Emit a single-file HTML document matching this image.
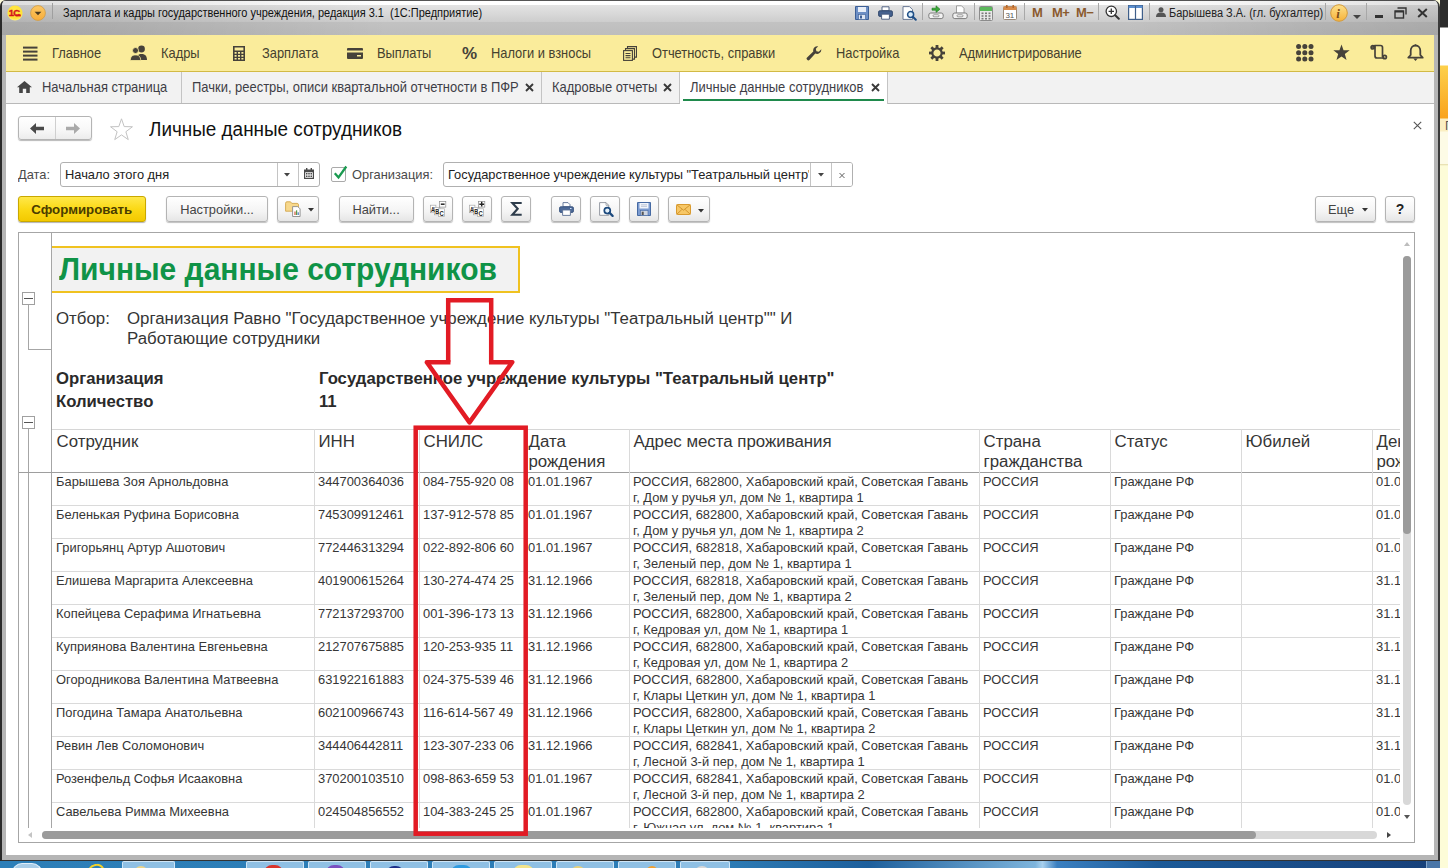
<!DOCTYPE html>
<html lang="ru"><head><meta charset="utf-8"><title>Личные данные сотрудников</title>
<style>
*{box-sizing:border-box;margin:0;padding:0}
html,body{width:1448px;height:868px;overflow:hidden}
body{position:relative;background:#fdfbd9;font-family:"Liberation Sans",Arial,sans-serif;font-size:13px;color:#222;-webkit-font-smoothing:antialiased}
.abs{position:absolute}
#win{position:absolute;left:0;top:0;width:1440px;height:861px;background:#b5b5b5;overflow:hidden;border-radius:6px 7px 0 0;border-left:2px solid #2a2a2a;border-right:2px solid #3a3a3a;border-bottom:1px solid #333}
#win>*{margin-left:-2px}
#content{position:absolute;left:6px;top:104px;width:1428px;height:751px;background:#fff}
#titlebar{position:absolute;left:0;top:0;width:1440px;height:35px;background:linear-gradient(90deg,rgba(0,0,0,.13) 0,rgba(0,0,0,.1) 8%,rgba(0,0,0,0) 27%,rgba(0,0,0,0) 78%,rgba(0,0,0,.12) 100%),linear-gradient(#555 0,#555 1px,#fff 1px,#fff 4.500px,#e3e3e3 5px,#d8d8d8 14px,#cdcdcd 22px,#c2c2c2 22.500px,#bdbdbd 35px)}
#ttl{position:absolute;left:63px;top:5px;font-size:12.3px;transform:scaleX(.893);transform-origin:0 0;white-space:pre;color:#111;line-height:16px}
#menubar{position:absolute;left:6px;top:35px;width:1428px;height:37px;background:#faec9b;border-bottom:1px solid #d2ba45}
.mi{position:absolute;top:10px;font-size:14.5px;transform:scaleX(.888);transform-origin:0 0;color:#45412f;line-height:16px;white-space:nowrap}
#tabbar{position:absolute;left:6px;top:72px;width:1428px;height:32px;background:#f2f2f2;border-bottom:1px solid #b9b9b9}
.tab{position:absolute;top:0;height:31px;border-right:1px solid #c4c4c4;font-size:13px;line-height:16px;color:#333;white-space:nowrap}
.tab span{position:absolute;top:7px;font-size:14.4px;transform:scaleX(.9);transform-origin:0 0;color:#3e3e46}
.lbl{position:absolute;font-size:13.6px;transform:scaleX(.945);transform-origin:0 0;line-height:16px;color:#4a4a4a;white-space:nowrap}
.cx{display:inline-block;font-size:13.6px;transform:scaleX(.945);transform-origin:50% 50%}
.inp>span{font-size:13.6px;transform:scaleX(.945);transform-origin:0 0}
.btn{position:absolute;top:196px;height:26px;border:1px solid #b4b4b4;border-radius:3px;background:linear-gradient(#fff,#f4f4f4 60%,#e6e6e6);box-shadow:0 1px 1px rgba(0,0,0,.25);font-size:13px;line-height:25px;text-align:center;color:#444;white-space:nowrap}
.inp{position:absolute;top:162px;height:25px;border:1px solid #b0b0b0;border-radius:3px;background:#fff;font-size:13px;line-height:23px;color:#222;white-space:nowrap;overflow:hidden}
#rep{position:absolute;left:18px;top:232px;width:1397px;height:611px;border:1px solid #a6a6a6;background:#fff;overflow:hidden}

#rep .vl{position:absolute;width:1px;background:#a6a6a6}
#rep .hl{position:absolute;height:1px;background:#dadada}
.rt{position:absolute;white-space:nowrap;font-size:16.85px;line-height:20px;color:#353535}
.rb{font-weight:bold;color:#2a2a2a;font-size:16.72px}
.rd{position:absolute;white-space:nowrap;font-size:12.9px;line-height:16px;color:#363636}
#clip{position:absolute;left:0;top:0;width:1381px;height:595px;overflow:hidden}
</style></head><body>
<div class="abs" style="left:0;top:861px;width:1448px;height:7px;background:linear-gradient(90deg,#2d7fb8 0,#2b7cb6 50%,#2a76b0 52%,#1d5f9c 60%,#7db4dc 71.500%,#a8d0ee 72%,#3a7fc0 73%,#1c5a98 80%,#173f78 100%)">
<div class="abs" style="left:122px;top:0;width:53px;height:7px;background:#8fc0e4;border:1px solid #cfe6f7;border-bottom:0;border-radius:2px 2px 0 0"></div>
<div class="abs" style="left:246px;top:0;width:58px;height:7px;background:#8fc0e4;border:1px solid #cfe6f7;border-bottom:0;border-radius:2px 2px 0 0"></div>
<div class="abs" style="left:308px;top:0;width:58px;height:7px;background:#8fc0e4;border:1px solid #cfe6f7;border-bottom:0;border-radius:2px 2px 0 0"></div>
<div class="abs" style="left:370px;top:0;width:58px;height:7px;background:#8fc0e4;border:1px solid #cfe6f7;border-bottom:0;border-radius:2px 2px 0 0"></div>
<div class="abs" style="left:432px;top:0;width:58px;height:7px;background:#8fc0e4;border:1px solid #cfe6f7;border-bottom:0;border-radius:2px 2px 0 0"></div>
<div class="abs" style="left:494px;top:0;width:58px;height:7px;background:#8fc0e4;border:1px solid #cfe6f7;border-bottom:0;border-radius:2px 2px 0 0"></div>
<div class="abs" style="left:556px;top:0;width:58px;height:7px;background:#8fc0e4;border:1px solid #cfe6f7;border-bottom:0;border-radius:2px 2px 0 0"></div>
<div class="abs" style="left:618px;top:0;width:58px;height:7px;background:#8fc0e4;border:1px solid #cfe6f7;border-bottom:0;border-radius:2px 2px 0 0"></div>
<div class="abs" style="left:680px;top:0;width:50px;height:7px;background:#8fc0e4;border:1px solid #cfe6f7;border-bottom:0;border-radius:2px 2px 0 0"></div>
<div class="abs" style="left:264px;top:4px;width:19px;height:8px;border-radius:9px 9px 0 0;background:#d9342b"></div>
<div class="abs" style="left:326px;top:4px;width:19px;height:8px;border-radius:9px 9px 0 0;background:#7a4fc0"></div>
<div class="abs" style="left:386px;top:5px;width:18px;height:8px;border-radius:9px 9px 0 0;background:#1c2f8a"></div>
<div class="abs" style="left:451px;top:4px;width:21px;height:8px;border-radius:10px 10px 0 0;background:#2f9be0"></div>
<div class="abs" style="left:513px;top:4px;width:21px;height:8px;border-radius:10px 10px 0 0;background:#f3e48a"></div>
<div class="abs" style="left:570px;top:5px;width:16px;height:8px;border-radius:8px 8px 0 0;background:#e8d27a"></div>
<div class="abs" style="left:646px;top:5px;width:12px;height:8px;border-radius:6px 6px 0 0;background:#f0a030"></div>
<div class="abs" style="left:694px;top:5px;width:16px;height:8px;border-radius:8px 8px 0 0;background:#d8d8d8"></div>
<div class="abs" style="left:134px;top:5px;width:14px;height:8px;border-radius:7px 7px 0 0;background:#ecd58a"></div>
<div class="abs" style="left:12px;top:2px;width:30px;height:10px;border-radius:15px 15px 0 0;background:#a9cde8;border:1px solid #dfeefa"></div>
<div class="abs" style="left:87px;top:3px;width:17px;height:8px;border-radius:9px 9px 0 0;border:2px solid #f1d22a;border-bottom:0;transform:rotate(-12deg)"></div>
<div class="abs" style="left:1426px;top:0;width:14px;height:7px;background:#4a76a8;border-left:1px solid #86a8cc"></div>
</div>
<div class="abs" style="left:1440px;top:0;width:8px;height:868px;overflow:hidden;background:linear-gradient(#2c2c2c 0,#2c2c2c 27px,#fff 28px,#fff 65px,#fdd04c 66px,#f9a31c 118px,#fbefc2 119px,#fbefc2 131px,#fdfbe6 132px,#fdfbe6 164px,#e9e2b4 164.500px,#fdfcd8 166px)"><span class="abs" style="left:5px;top:119px;font-size:12px;line-height:14px;color:#555">П</span></div>
<div id="win">
 <div id="titlebar">
<!-- 1C logo -->
<svg class="abs" style="left:7px;top:5px;opacity:.999" width="16" height="16" viewBox="0 0 16 16"><defs><radialGradient id="g1c" cx=".5" cy=".35" r=".7"><stop offset="0" stop-color="#ffe94a"/><stop offset=".7" stop-color="#ffe135"/><stop offset="1" stop-color="#fff3a0"/></radialGradient></defs><circle cx="8" cy="8" r="7.6" fill="url(#g1c)"/><text x="1.800" y="11.300" font-family="Liberation Sans" font-weight="bold" font-size="9.500" fill="#d3151c" stroke="#d3151c" stroke-width=".35" letter-spacing="-.9">1С</text><rect x="8.600" y="9.500" width="5.200" height="1.900" fill="#d3151c"/></svg>
<svg class="abs" style="left:30px;top:5px" width="16" height="16" viewBox="0 0 16 16"><defs><linearGradient id="gdd" x1="0" y1="0" x2="0" y2="1"><stop offset="0" stop-color="#fbc865"/><stop offset="1" stop-color="#f8ad3a"/></linearGradient></defs><circle cx="8" cy="8" r="7.4" fill="url(#gdd)" stroke="#cf9a45" stroke-width=".8"/><path d="M4.6 6.7h6.8L8 10.3z" fill="#4a3a20"/></svg>
<div class="abs" style="left:52px;top:3px;width:1px;height:16px;background:#9f9f9f"></div>
<div id="ttl">Зарплата и кадры государственного учреждения, редакция 3.1  (1С:Предприятие)</div>
<svg class="abs" style="left:855px;top:6px" width="14" height="14" viewBox="0 0 14 14"><path d="M.5 .5h13v13h-13z" fill="#6d8fc5" stroke="#3d5f96"/><rect x="3" y="1" width="8" height="5" fill="#e8eef8"/><rect x="3.5" y="8.5" width="7" height="5" fill="#dfe6f2" stroke="#3d5f96" stroke-width=".6"/><rect x="5" y="9.5" width="2" height="3" fill="#3d5f96"/></svg>
<svg class="abs" style="left:878px;top:6px" width="15" height="14" viewBox="0 0 15 14"><path d="M4 .8h7v4H4z" fill="#fff" stroke="#44577a" stroke-width=".9"/><rect x=".6" y="4.8" width="13.8" height="5.6" rx="1.2" fill="#46628f" stroke="#2e4468" stroke-width=".9"/><path d="M3.6 8.2h7.8v5H3.6z" fill="#fff" stroke="#44577a" stroke-width=".9"/></svg>
<svg class="abs" style="left:902px;top:6px" width="15" height="15" viewBox="0 0 15 15"><path d="M1 .6h6.5l3 3v9.8H1z" fill="#fff" stroke="#5a6c8a" stroke-width=".9"/><circle cx="8.6" cy="8.6" r="3" fill="#d9ecfa" stroke="#1f4f86" stroke-width="1.5"/><path d="M10.8 10.8l3 3" stroke="#1f4f86" stroke-width="2" stroke-linecap="round"/></svg>
<div class="abs" style="left:922px;top:3px;width:1px;height:17px;background:#a8a8a8"></div>
<svg class="abs" style="left:928px;top:5px" width="16" height="15" viewBox="0 0 16 15"><path d="M4 3.2h4V.8l4 3.4-4 3.4V5.2H4z" fill="#3aa83a" stroke="#1f7a1f" stroke-width=".6"/><rect x=".8" y="8" width="14.4" height="5.6" rx="2" fill="#f2f2f2" stroke="#7d7d7d" stroke-width="1"/><rect x="5" y="9.8" width="6" height="2" rx="1" fill="#fff" stroke="#7d7d7d" stroke-width=".8"/></svg>
<svg class="abs" style="left:952px;top:5px" width="16" height="15" viewBox="0 0 16 15"><path d="M4.5 .8h5l2.5 2.5v5h-7.5z" fill="#fff" stroke="#8a8a8a" stroke-width=".8"/><rect x=".8" y="8" width="14.4" height="5.6" rx="2" fill="#f2f2f2" stroke="#7d7d7d" stroke-width="1"/><rect x="5" y="9.8" width="6" height="2" rx="1" fill="#fff" stroke="#7d7d7d" stroke-width=".8"/></svg>
<div class="abs" style="left:974px;top:3px;width:1px;height:17px;background:#a8a8a8"></div>
<svg class="abs" style="left:979px;top:6px" width="14" height="15" viewBox="0 0 14 15"><rect x=".5" y=".5" width="13" height="14" rx="1" fill="#e9e9e9" stroke="#8b8b8b"/><rect x="1" y="1" width="12" height="4" fill="#5cb85c"/><g fill="#7b7b7b"><rect x="2.5" y="6.5" width="2" height="1.6"/><rect x="6" y="6.5" width="2" height="1.6"/><rect x="9.5" y="6.5" width="2" height="1.6"/><rect x="2.5" y="9.2" width="2" height="1.6"/><rect x="6" y="9.2" width="2" height="1.6"/><rect x="9.5" y="9.2" width="2" height="1.6"/><rect x="2.5" y="11.9" width="2" height="1.6"/><rect x="6" y="11.9" width="2" height="1.6"/><rect x="9.5" y="11.9" width="2" height="1.6"/></g></svg>
<svg class="abs" style="left:1003px;top:5px" width="14" height="15" viewBox="0 0 14 15"><rect x=".5" y="1.5" width="13" height="13" rx="1" fill="#fff" stroke="#9a8a7a"/><rect x=".5" y="1.5" width="13" height="3.5" fill="#d98b4a"/><rect x="3" y="0" width="1.6" height="3" fill="#b5672a"/><rect x="9.4" y="0" width="1.6" height="3" fill="#b5672a"/><text x="2.4" y="12.6" font-family="Liberation Sans" font-size="8" fill="#555">31</text></svg>
<div class="abs" style="left:1024px;top:3px;width:1px;height:17px;background:#a8a8a8"></div>
<div class="abs" style="left:1032px;top:6px;font-size:13px;font-weight:bold;color:#8a5a2e;letter-spacing:-.5px;line-height:14px;white-space:nowrap">M</div>
<div class="abs" style="left:1052px;top:6px;font-size:13px;font-weight:bold;color:#8a5a2e;letter-spacing:-.5px;line-height:14px;white-space:nowrap">M+</div>
<div class="abs" style="left:1076px;top:6px;font-size:13px;font-weight:bold;color:#8a5a2e;letter-spacing:-.5px;line-height:14px;white-space:nowrap">M−</div>
<div class="abs" style="left:1098px;top:3px;width:1px;height:17px;background:#a8a8a8"></div>
<svg class="abs" style="left:1105px;top:5px" width="15" height="15" viewBox="0 0 15 15"><circle cx="6.3" cy="6.3" r="5.2" fill="#fff" stroke="#333" stroke-width="1.3"/><path d="M3.6 6.3h5.4M6.3 3.6v5.4" stroke="#333" stroke-width="1.3"/><path d="M10.2 10.2l3.6 3.6" stroke="#333" stroke-width="2" stroke-linecap="round"/></svg>
<svg class="abs" style="left:1128px;top:5px" width="15" height="15" viewBox="0 0 15 15"><rect x=".6" y=".6" width="13.8" height="13.8" fill="#fff" stroke="#3f5f8a" stroke-width="1.2"/><rect x=".6" y=".6" width="13.8" height="2.4" fill="#5b8fd0"/><path d="M7.5 1v13" stroke="#3f5f8a" stroke-width="1.2"/></svg>
<div class="abs" style="left:1149px;top:3px;width:1px;height:17px;background:#a8a8a8"></div>
<svg class="abs" style="left:1156px;top:7px" width="10" height="10" viewBox="0 0 10 10"><circle cx="5" cy="2.8" r="2.5" fill="#555"/><path d="M0 10c0-3.5 2-4.6 5-4.6s5 1.100 5 4.600z" fill="#555"/></svg>
<div class="abs" style="left:1169px;top:5px;font-size:12.3px;transform:scaleX(.893);transform-origin:0 0;line-height:16px;color:#222;white-space:nowrap">Барышева З.А. (гл. бухгалтер)</div>
<div class="abs" style="left:1325px;top:3px;width:1px;height:17px;background:#a8a8a8"></div>
<svg class="abs" style="left:1330px;top:4px" width="18" height="18" viewBox="0 0 18 18"><defs><linearGradient id="ginf" x1="0" y1="0" x2="0" y2="1"><stop offset="0" stop-color="#fde08a"/><stop offset="1" stop-color="#f6b23a"/></linearGradient></defs><circle cx="9" cy="9" r="8.300" fill="url(#ginf)" stroke="#d39a3a" stroke-width="1"/><text x="6.300" y="13.500" font-family="Liberation Serif" font-style="italic" font-weight="bold" font-size="13" fill="#7a4a1a">i</text></svg>
<svg class="abs" style="left:1353px;top:15px" width="8" height="4" viewBox="0 0 8 4"><path d="M0 0h8L4 4z" fill="#444"/></svg>
<div class="abs" style="left:1366px;top:3px;width:1px;height:17px;background:#a8a8a8"></div>
<div class="abs" style="left:1375px;top:15px;width:8px;height:2.500px;background:#333"></div>
<svg class="abs" style="left:1394px;top:7px" width="13" height="12" viewBox="0 0 13 12"><path d="M3.500 1h8.500v6.500" fill="none" stroke="#333" stroke-width="1.400"/><rect x="1" y="4" width="8.500" height="7" fill="none" stroke="#333" stroke-width="1.400"/><path d="M1 4.600h8.500" stroke="#333" stroke-width="1.800"/></svg>
<svg class="abs" style="left:1417px;top:8px" width="11" height="10" viewBox="0 0 11 10"><path d="M1.200 1l8.600 8M9.800 1l-8.600 8" stroke="#333" stroke-width="2"/></svg>
</div>
 <div id="menubar">
<svg class="abs" style="left:17px;top:11px" width="15" height="15" viewBox="0 0 15 15"><g fill="#46423a"><rect x="0" y=".6" width="14.500" height="2"/><rect x="0" y="4.600" width="14.500" height="2"/><rect x="0" y="8.600" width="14.500" height="2"/><rect x="0" y="12.600" width="14.500" height="2"/></g></svg>
<div class="mi" style="left:46px">Главное</div>
<svg class="abs" style="left:124px;top:10px" width="18" height="16" viewBox="0 0 18 16"><g fill="#46423a"><circle cx="11.500" cy="4" r="3.400"/><path d="M6.500 15c0-4.500 2-6 5-6s5.500 1.500 5.500 6z"/><circle cx="5.500" cy="5.500" r="3" stroke="#faec9b" stroke-width=".8"/><path d="M.3 15.500c0-4 2-5.500 5.200-5.500s5.200 1.500 5.200 5.500z" stroke="#faec9b" stroke-width=".8"/></g></svg>
<div class="mi" style="left:155px">Кадры</div>
<svg class="abs" style="left:227px;top:11px" width="12" height="15" viewBox="0 0 12 15"><path fill="#46423a" fill-rule="evenodd" d="M0 0h12v15H0zM1.600 1.600v2.800h8.800V1.600zM1.600 6v1.800h2V6zM5 6v1.800h2V6zM8.400 6v1.800h2V6zM1.600 9v1.800h2V9zM5 9v1.800h2V9zM8.400 9v1.800h2V9zM1.600 12v1.600h2V12zM5 12v1.600h2V12zM8.400 12v1.600h2V12z"/></svg>
<div class="mi" style="left:256px">Зарплата</div>
<svg class="abs" style="left:341px;top:13px" width="16" height="11" viewBox="0 0 16 11"><path fill="#46423a" fill-rule="evenodd" d="M1 0h14a1 1 0 0 1 1 1v9a1 1 0 0 1-1 1H1a1 1 0 0 1-1-1V1a1 1 0 0 1 1-1zM0 2.600v1.800h16V2.600zM10 7v1.600h4V7z"/></svg>
<div class="mi" style="left:371px">Выплаты</div>
<div class="abs" style="left:456px;top:10px;font-size:17px;font-weight:bold;color:#46423a;line-height:18px">%</div>
<div class="mi" style="left:485px">Налоги и взносы</div>
<svg class="abs" style="left:617px;top:11px" width="14" height="15" viewBox="0 0 14 15"><g fill="none" stroke="#46423a" stroke-width="1.100"><path d="M4.500 2.500V.600h9v10.500h-2"/><path d="M2.500 4.500V2.600h9v10.500h-2"/><rect x=".6" y="4.600" width="8.800" height="9.800" fill="#faec9b"/><path d="M2.500 7.500h5M2.500 9.600h5M2.500 11.700h5"/></g></svg>
<div class="mi" style="left:646px">Отчетность, справки</div>
<svg class="abs" style="left:800px;top:11px" width="16" height="15" viewBox="0 0 16 15"><path fill="#46423a" d="M15.300 3.200a4.300 4.300 0 0 1-6 4.300L3.600 13.800a1.700 1.700 0 0 1-2.500-2.400L7.300 5.600A4.300 4.300 0 0 1 12.200.300L9.800 2.800l.6 2.400 2.400.6z"/></svg>
<div class="mi" style="left:830px">Настройка</div>
<svg class="abs" style="left:923px;top:10px" width="16" height="16" viewBox="0 0 16 16"><g transform="translate(8 8)"><g fill="#46423a"><rect x="-1.400" y="-8" width="2.800" height="4" transform="rotate(0)"/><rect x="-1.400" y="-8" width="2.800" height="4" transform="rotate(45)"/><rect x="-1.400" y="-8" width="2.800" height="4" transform="rotate(90)"/><rect x="-1.400" y="-8" width="2.800" height="4" transform="rotate(135)"/><rect x="-1.400" y="-8" width="2.800" height="4" transform="rotate(180)"/><rect x="-1.400" y="-8" width="2.800" height="4" transform="rotate(225)"/><rect x="-1.400" y="-8" width="2.800" height="4" transform="rotate(270)"/><rect x="-1.400" y="-8" width="2.800" height="4" transform="rotate(315)"/></g><circle r="4.700" fill="none" stroke="#46423a" stroke-width="2.200"/></g></svg>
<div class="mi" style="left:953px">Администрирование</div>
<svg class="abs" style="left:1290px;top:9px" width="18" height="18" viewBox="0 0 18 18"><g fill="#46423a"><circle cx="2.6" cy="2.6" r="2.500"/><circle cx="2.6" cy="8.8" r="2.500"/><circle cx="2.6" cy="15.0" r="2.500"/><circle cx="8.8" cy="2.6" r="2.500"/><circle cx="8.8" cy="8.8" r="2.500"/><circle cx="8.8" cy="15.0" r="2.500"/><circle cx="15.0" cy="2.6" r="2.500"/><circle cx="15.0" cy="8.8" r="2.500"/><circle cx="15.0" cy="15.0" r="2.500"/></g></svg>
<svg class="abs" style="left:1327px;top:9px" width="17" height="17" viewBox="0 0 17 17"><polygon fill="#46423a" points="8.50,0.40 10.56,6.17 16.68,6.34 11.83,10.08 13.55,15.96 8.50,12.50 3.45,15.96 5.17,10.08 0.32,6.34 6.44,6.17"/></svg>
<svg class="abs" style="left:1364px;top:9px" width="18" height="17" viewBox="0 0 18 17"><g fill="none" stroke="#46423a" stroke-width="1.700"><path d="M3 4.500v-1a2 2 0 0 1 2-2h5.500a2 2 0 0 1 2 2v9.500"/><path d="M5 1.500v10.500a2 2 0 0 0 2 2h7.500"/><circle cx="2.800" cy="3.300" r="1.700"/><circle cx="14.700" cy="13" r="1.700"/></g></svg>
<svg class="abs" style="left:1401px;top:9px" width="17" height="18" viewBox="0 0 17 18"><path d="M8.500 1.500c-3 0-4.800 2.300-4.800 5.300v4.200L1.300 13.700h14.400L13.300 11V6.800c0-3-1.800-5.300-4.800-5.300z" fill="none" stroke="#46423a" stroke-width="1.800" stroke-linejoin="round"/><path d="M6.300 14.500h4.400L8.500 17z" fill="#46423a"/><circle cx="8.500" cy="1.300" r="1" fill="#46423a"/></svg>
</div>
 <div id="tabbar">
<svg class="abs" style="left:11px;top:9px" width="15" height="12" viewBox="0 0 15 12"><path fill="#444" d="M7.500 0L0 6.300h2.200V12h3.600V7.800h3.400V12h3.600V6.300H15z"/></svg>
<div class="tab" style="left:0;width:176px"><span style="left:36px">Начальная страница</span></div>
<div class="tab" style="left:176px;width:360px"><span style="left:10px">Пачки, реестры, описи квартальной отчетности в ПФР</span></div>
<svg class="abs" style="left:519px;top:11px" width="9" height="9" viewBox="0 0 9 9"><path d="M1 1l7 7M8 1l-7 7" stroke="#3a3a3a" stroke-width="1.900"/></svg>
<div class="tab" style="left:536px;width:138px"><span style="left:10px">Кадровые отчеты</span></div>
<svg class="abs" style="left:657px;top:11px" width="9" height="9" viewBox="0 0 9 9"><path d="M1 1l7 7M8 1l-7 7" stroke="#3a3a3a" stroke-width="1.900"/></svg>
<div class="tab" style="left:674px;width:208px;background:#fff;height:32px"><span style="left:10px">Личные данные сотрудников</span><div class="abs" style="left:3px;top:27px;width:201px;height:2px;background:#1f8a4c"></div></div>
<svg class="abs" style="left:865px;top:11px" width="9" height="9" viewBox="0 0 9 9"><path d="M1 1l7 7M8 1l-7 7" stroke="#3a3a3a" stroke-width="1.900"/></svg>
</div>
 <div id="content"></div>
<div class="abs" style="left:18px;top:116px;width:74px;height:24px;border:1px solid #b4b4b4;border-radius:3px;background:linear-gradient(#fff,#f7f7f7 60%,#ececec);box-shadow:0 1px 1px rgba(0,0,0,.28)"><div class="abs" style="left:36px;top:0;width:1px;height:22px;background:#cfcfcf"></div></div>
<svg class="abs" style="left:30px;top:123px" width="14" height="11" viewBox="0 0 14 11"><path d="M0 5.500L6 0v3.800h8v3.400H6V11z" fill="#4a4a4a"/></svg>
<svg class="abs" style="left:66px;top:123px" width="14" height="11" viewBox="0 0 14 11"><path d="M14 5.500L8 0v3.800H0v3.400h8V11z" fill="#aaa"/></svg>
<svg class="abs" style="left:110px;top:118px" width="23" height="23" viewBox="0 0 23 23"><polygon points="11.50,0.80 14.20,8.58 22.44,8.75 15.87,13.72 18.26,21.60 11.50,16.90 4.74,21.60 7.13,13.72 0.56,8.75 8.80,8.58" fill="#fff" stroke="#c2c2c2" stroke-width="1"/></svg>
<div class="abs" style="left:149px;top:117px;font-size:20px;transform:scaleX(.945);transform-origin:0 0;line-height:24px;color:#111;white-space:nowrap">Личные данные сотрудников</div>
<svg class="abs" style="left:1413px;top:121px" width="9" height="9" viewBox="0 0 9 9"><path d="M.8 .8l7.400 7.400M8.200 .8L.8 8.200" stroke="#555" stroke-width="1.100"/></svg>
<div class="lbl" style="left:18px;top:167px">Дата:</div>
<div class="inp" style="left:60px;width:260px"><span class="abs" style="left:4px;top:0">Начало этого дня</span><div class="abs" style="left:216px;top:0;width:1px;height:23px;background:#c4c4c4"></div><div class="abs" style="left:237px;top:0;width:1px;height:23px;background:#c4c4c4"></div><svg class="abs" style="left:223px;top:10px" width="6" height="4" viewBox="0 0 6 4"><path d="M0 0h6L3 3.600z" fill="#444"/></svg><svg class="abs" style="left:243px;top:5px" width="10" height="11" viewBox="0 0 10 11"><path fill="#4a4a4a" fill-rule="evenodd" d="M0 1.500h10V11H0zM1.200 4.200v5.600h7.600V4.200zM2 5h1.500v1.500H2zM4.250 5h1.500v1.500h-1.500zM6.500 5H8v1.500H6.500zM2 7.500h1.500V9H2zM4.250 7.500h1.500V9h-1.500zM6.500 7.500H8V9H6.500z"/><rect x="2" y="0" width="1.400" height="2.500" fill="#4a4a4a"/><rect x="6.600" y="0" width="1.400" height="2.500" fill="#4a4a4a"/></svg></div>
<div class="abs" style="left:331px;top:167px;width:15px;height:15px;border:1px solid #aaa;border-radius:2px;background:#fff"></div><svg class="abs" style="left:333px;top:165px" width="15" height="15" viewBox="0 0 15 15"><path d="M1.800 8.200l3.700 4.300L13.300 1.500" fill="none" stroke="#1a9a50" stroke-width="2.300"/></svg>
<div class="lbl" style="left:352px;top:167px">Организация:</div>
<div class="inp" style="left:443px;width:410px"><span class="abs" style="left:4px;top:0">Государственное учреждение культуры "Театральный центр"</span><div class="abs" style="left:365px;top:0;width:46px;height:23px;background:#fff"></div><div class="abs" style="left:366px;top:0;width:1px;height:23px;background:#c4c4c4"></div><div class="abs" style="left:387px;top:0;width:1px;height:23px;background:#c4c4c4"></div><svg class="abs" style="left:374px;top:10px" width="6" height="4" viewBox="0 0 6 4"><path d="M0 0h6L3 3.600z" fill="#444"/></svg><svg class="abs" style="left:395px;top:9px" width="6" height="7" viewBox="0 0 7 7"><path d="M.6 .6l5.800 5.800M6.400 .6L.6 6.400" stroke="#555" stroke-width="1.100"/></svg></div>
<div class="btn" style="left:18px;width:128px;font-weight:bold;color:#4a3c00;border-color:#c9a800;background:linear-gradient(#ffe84a,#fbd916 50%,#f3c900);box-shadow:0 1px 1px rgba(0,0,0,.3)"><span class="cx" style="transform:scaleX(.975)">Сформировать</span></div>
<div class="btn" style="left:166px;width:102px;"><span class="cx">Настройки...</span></div>
<div class="btn" style="left:277px;width:42px;"><svg class="abs" style="left:7px;top:3px" width="18" height="18" viewBox="0 0 18 18"><path d="M.6 3.200c0-.8.500-1.400 1.300-1.400h3.600l1.300 1.600h5.400c.8 0 1.300.6 1.300 1.400v6.400H.6z" fill="#f7d88c" stroke="#d2a64c" stroke-width=".9"/><path d="M7.600 6.600h5.200l2.300 2.300v7.600H7.600z" fill="#fff" stroke="#8a8a8a" stroke-width=".9"/><rect x="9.400" y="11.500" width="1.200" height="3.500" fill="#d05a3a"/><rect x="11" y="10.300" width="1.200" height="4.700" fill="#5a9a4a"/><rect x="12.600" y="12.300" width="1.200" height="2.700" fill="#4a7ac0"/></svg><svg class="abs" style="left:30px;top:11px" width="6" height="4" viewBox="0 0 6 4"><path d="M0 0h6L3 3.400z" fill="#333"/></svg></div>
<div class="btn" style="left:339px;width:75px;"><span class="cx">Найти...</span></div>
<div class="btn" style="left:423px;width:30px;"><svg class="abs" style="left:6px;top:4px;opacity:.999" width="17" height="17" viewBox="0 0 17 17"><g fill="#fff" stroke="#a8a8a8" stroke-width=".7"><rect x=".4" y="4.200" width="5.500" height="7.500"/><rect x="4.400" y="6.500" width="5.500" height="7.300"/><rect x="8.500" y="7.800" width="6.100" height="7.800"/><rect x="9.600" y=".4" width="6.200" height="5.700" stroke="#8a8a8a"/></g><g font-family="Liberation Sans" font-weight="bold" font-size="7.400" fill="#222"><text transform="translate(1.100 11) scale(.72 1)">A</text><text transform="translate(5.200 13.200) scale(.72 1)">B</text><text transform="translate(9.500 15) scale(.8 1)">C</text></g><path d="M10.800 3.200h3.800" stroke="#222" stroke-width="1.500"/></svg></div>
<div class="btn" style="left:462px;width:30px;"><svg class="abs" style="left:6px;top:4px;opacity:.999" width="17" height="17" viewBox="0 0 17 17"><g fill="#fff" stroke="#a8a8a8" stroke-width=".7"><rect x=".4" y="4.200" width="5.500" height="7.500"/><rect x="4.400" y="6.500" width="5.500" height="7.300"/><rect x="8.500" y="7.800" width="6.100" height="7.800"/><rect x="9.600" y=".4" width="6.200" height="5.700" stroke="#8a8a8a"/></g><g font-family="Liberation Sans" font-weight="bold" font-size="7.400" fill="#222"><text transform="translate(1.100 11) scale(.72 1)">A</text><text transform="translate(5.200 13.200) scale(.72 1)">B</text><text transform="translate(9.500 15) scale(.8 1)">C</text></g><path d="M10.300 3.200h4.800M12.700 .8v4.800" stroke="#222" stroke-width="1.400"/></svg></div>
<div class="btn" style="left:501px;width:30px;"><svg class="abs" style="left:8px;top:4px" width="13" height="16" viewBox="0 0 13 16"><path d="M11.700 2H2.400l5.300 5.800L2.400 13.700H11.700" fill="none" stroke="#2d3c4b" stroke-width="2.100" stroke-linejoin="miter"/></svg></div>
<div class="btn" style="left:551px;width:30px;"><svg class="abs" style="left:7px;top:5px" width="15" height="14" viewBox="0 0 15 14"><path d="M4 .600h5l2 2v2.200H4z" fill="#fff" stroke="#5a6f94" stroke-width=".9"/><rect x=".6" y="4.800" width="13.800" height="5.600" rx="1.200" fill="#4d6a98" stroke="#34507c" stroke-width=".9"/><path d="M3.600 8h7.800v5.400H3.600z" fill="#fff" stroke="#5a6f94" stroke-width=".9"/><rect x="11" y="6" width="1.500" height="1" fill="#cfe0ff"/></svg></div>
<div class="btn" style="left:590px;width:30px;"><svg class="abs" style="left:8px;top:5px" width="15" height="15" viewBox="0 0 15 15"><path d="M.6 .600h6.400l2.700 2.700v10H.6z" fill="#fff" stroke="#8a8f98" stroke-width=".9"/><path d="M7 .600v2.700h2.700" fill="none" stroke="#8a8f98" stroke-width=".7"/><circle cx="8.300" cy="8.600" r="3" fill="#e4f1fb" stroke="#1d4a7e" stroke-width="1.700"/><path d="M10.600 10.900l3 3" stroke="#1d4a7e" stroke-width="2.200" stroke-linecap="round"/></svg></div>
<div class="btn" style="left:629px;width:30px;"><svg class="abs" style="left:7px;top:5px" width="14" height="14" viewBox="0 0 14 14"><path d="M.5 .5h13v13h-13z" fill="#7b9bd0" stroke="#466aa3"/><rect x="2.500" y="1" width="9" height="5.500" fill="#f2f5fb"/><path d="M4 2.800h6M4 4.400h6" stroke="#9aa8c0" stroke-width=".6"/><rect x="3.500" y="8.500" width="7.500" height="5" fill="#cfd6e2" stroke="#466aa3" stroke-width=".6"/><rect x="4.700" y="9.700" width="2" height="3.300" fill="#555"/></svg></div>
<div class="btn" style="left:668px;width:42px;"><svg class="abs" style="left:7px;top:7px" width="15" height="11" viewBox="0 0 15 11"><rect x=".5" y=".5" width="14" height="10" rx="1" fill="#f7c766" stroke="#d99a2e"/><path d="M.8 .8l6.700 5.400L14.200 .8M.8 10.200l5-4.600M14.200 10.200l-5-4.600" fill="none" stroke="#c98a22" stroke-width=".8"/></svg><svg class="abs" style="left:29px;top:12px" width="6" height="4" viewBox="0 0 6 4"><path d="M0 0h6L3 3.400z" fill="#333"/></svg></div>
<div class="btn" style="left:1315px;width:61px;"><span class="abs" style="left:12px;top:0;font-size:13.6px;transform:scaleX(.945);transform-origin:0 0">Еще</span><svg class="abs" style="left:46px;top:11px" width="6" height="4" viewBox="0 0 6 4"><path d="M0 0h6L3 3.400z" fill="#333"/></svg></div>
<div class="btn" style="left:1385px;width:30px;"><span style="font-weight:bold;color:#222;font-size:14px">?</span></div>
 <div id="rep">
<div id="clip">
<div class="vl" style="left:32px;top:0;height:595px"></div>
<div class="abs" style="left:33px;top:13px;width:468px;height:47px;background:#f2f2f2;border-top:2px solid #f0c220;border-bottom:2px solid #f0c220;border-right:2px solid #f0c220"></div>
<div class="abs" style="left:40px;top:19px;font-size:31.2px;line-height:36px;font-weight:bold;color:#0f9347;white-space:nowrap;transform:scaleX(.9615);transform-origin:0 0">Личные данные сотрудников</div>
<div class="abs" style="left:3px;top:59px;width:13px;height:13px;border:1px solid #a0a0a0;background:#fff"><div class="abs" style="left:1px;top:5px;width:9px;height:1px;background:#555"></div></div>
<div class="vl" style="left:9px;top:72px;height:44px"></div><div class="abs" style="left:9px;top:116px;width:23px;height:1px;background:#a6a6a6"></div>
<div class="abs" style="left:3px;top:183px;width:13px;height:13px;border:1px solid #a0a0a0;background:#fff"><div class="abs" style="left:1px;top:5px;width:9px;height:1px;background:#555"></div></div>
<div class="vl" style="left:9px;top:196px;height:399px"></div>
<div class="rt" style="left:37px;top:76px">Отбор:</div>
<div class="rt" style="left:108px;top:76px">Организация Равно "Государственное учреждение культуры "Театральный центр"" И</div>
<div class="rt" style="left:108px;top:96px">Работающие сотрудники</div>
<div class="rt rb" style="left:37px;top:136px">Организация</div>
<div class="rt rb" style="left:300px;top:136px">Государственное учреждение культуры "Театральный центр"</div>
<div class="rt rb" style="left:37px;top:159px">Количество</div>
<div class="rt rb" style="left:300px;top:159px">11</div>
<div class="hl" style="left:33px;top:196px;width:1400px;background:#d6d6d6"></div>
<div class="hl" style="left:0;top:239px;width:1400px;background:#9e9e9e"></div>
<div class="vl" style="left:295px;top:196px;height:399px;background:#dadada"></div>
<div class="vl" style="left:400px;top:196px;height:399px;background:#dadada"></div>
<div class="vl" style="left:505px;top:196px;height:399px;background:#dadada"></div>
<div class="vl" style="left:610px;top:196px;height:399px;background:#dadada"></div>
<div class="vl" style="left:960px;top:196px;height:399px;background:#dadada"></div>
<div class="vl" style="left:1091px;top:196px;height:399px;background:#dadada"></div>
<div class="vl" style="left:1222px;top:196px;height:399px;background:#dadada"></div>
<div class="vl" style="left:1353px;top:196px;height:399px;background:#dadada"></div>
<div class="rt" style="left:37.5px;top:199px">Сотрудник</div>
<div class="rt" style="left:299.5px;top:199px">ИНН</div>
<div class="rt" style="left:404.5px;top:199px">СНИЛС</div>
<div class="rt" style="left:509.5px;top:199px">Дата<br>рождения</div>
<div class="rt" style="left:614.5px;top:199px">Адрес места проживания</div>
<div class="rt" style="left:964.5px;top:199px">Страна<br>гражданства</div>
<div class="rt" style="left:1095.5px;top:199px">Статус</div>
<div class="rt" style="left:1226.5px;top:199px">Юбилей</div>
<div class="rt" style="left:1357.5px;top:199px">День<br>рождения</div>
<div class="rd" style="left:37px;top:241px">Барышева Зоя Арнольдовна</div>
<div class="rd" style="left:299px;top:241px">344700364036</div>
<div class="rd" style="left:404px;top:241px">084-755-920 08</div>
<div class="rd" style="left:509px;top:241px">01.01.1967</div>
<div class="rd" style="left:614px;top:241px">РОССИЯ, 682800, Хабаровский край, Советская Гавань<br>г, Дом у ручья ул, дом № 1, квартира 1</div>
<div class="rd" style="left:964px;top:241px">РОССИЯ</div>
<div class="rd" style="left:1095px;top:241px">Граждане РФ</div>
<div class="rd" style="left:1357px;top:241px">01.01.</div>
<div class="hl" style="left:33px;top:272px;width:1400px"></div>
<div class="rd" style="left:37px;top:274px">Беленькая Руфина Борисовна</div>
<div class="rd" style="left:299px;top:274px">745309912461</div>
<div class="rd" style="left:404px;top:274px">137-912-578 85</div>
<div class="rd" style="left:509px;top:274px">01.01.1967</div>
<div class="rd" style="left:614px;top:274px">РОССИЯ, 682800, Хабаровский край, Советская Гавань<br>г, Дом у ручья ул, дом № 1, квартира 2</div>
<div class="rd" style="left:964px;top:274px">РОССИЯ</div>
<div class="rd" style="left:1095px;top:274px">Граждане РФ</div>
<div class="rd" style="left:1357px;top:274px">01.01.</div>
<div class="hl" style="left:33px;top:305px;width:1400px"></div>
<div class="rd" style="left:37px;top:307px">Григорьянц Артур Ашотович</div>
<div class="rd" style="left:299px;top:307px">772446313294</div>
<div class="rd" style="left:404px;top:307px">022-892-806 60</div>
<div class="rd" style="left:509px;top:307px">01.01.1967</div>
<div class="rd" style="left:614px;top:307px">РОССИЯ, 682818, Хабаровский край, Советская Гавань<br>г, Зеленый пер, дом № 1, квартира 1</div>
<div class="rd" style="left:964px;top:307px">РОССИЯ</div>
<div class="rd" style="left:1095px;top:307px">Граждане РФ</div>
<div class="rd" style="left:1357px;top:307px">01.01.</div>
<div class="hl" style="left:33px;top:338px;width:1400px"></div>
<div class="rd" style="left:37px;top:340px">Елишева Маргарита Алексеевна</div>
<div class="rd" style="left:299px;top:340px">401900615264</div>
<div class="rd" style="left:404px;top:340px">130-274-474 25</div>
<div class="rd" style="left:509px;top:340px">31.12.1966</div>
<div class="rd" style="left:614px;top:340px">РОССИЯ, 682818, Хабаровский край, Советская Гавань<br>г, Зеленый пер, дом № 1, квартира 2</div>
<div class="rd" style="left:964px;top:340px">РОССИЯ</div>
<div class="rd" style="left:1095px;top:340px">Граждане РФ</div>
<div class="rd" style="left:1357px;top:340px">31.12.</div>
<div class="hl" style="left:33px;top:371px;width:1400px"></div>
<div class="rd" style="left:37px;top:373px">Копейцева Серафима Игнатьевна</div>
<div class="rd" style="left:299px;top:373px">772137293700</div>
<div class="rd" style="left:404px;top:373px">001-396-173 13</div>
<div class="rd" style="left:509px;top:373px">31.12.1966</div>
<div class="rd" style="left:614px;top:373px">РОССИЯ, 682800, Хабаровский край, Советская Гавань<br>г, Кедровая ул, дом № 1, квартира 1</div>
<div class="rd" style="left:964px;top:373px">РОССИЯ</div>
<div class="rd" style="left:1095px;top:373px">Граждане РФ</div>
<div class="rd" style="left:1357px;top:373px">31.12.</div>
<div class="hl" style="left:33px;top:404px;width:1400px"></div>
<div class="rd" style="left:37px;top:406px">Куприянова Валентина Евгеньевна</div>
<div class="rd" style="left:299px;top:406px">212707675885</div>
<div class="rd" style="left:404px;top:406px">120-253-935 11</div>
<div class="rd" style="left:509px;top:406px">31.12.1966</div>
<div class="rd" style="left:614px;top:406px">РОССИЯ, 682800, Хабаровский край, Советская Гавань<br>г, Кедровая ул, дом № 1, квартира 2</div>
<div class="rd" style="left:964px;top:406px">РОССИЯ</div>
<div class="rd" style="left:1095px;top:406px">Граждане РФ</div>
<div class="rd" style="left:1357px;top:406px">31.12.</div>
<div class="hl" style="left:33px;top:437px;width:1400px"></div>
<div class="rd" style="left:37px;top:439px">Огородникова Валентина Матвеевна</div>
<div class="rd" style="left:299px;top:439px">631922161883</div>
<div class="rd" style="left:404px;top:439px">024-375-539 46</div>
<div class="rd" style="left:509px;top:439px">31.12.1966</div>
<div class="rd" style="left:614px;top:439px">РОССИЯ, 682800, Хабаровский край, Советская Гавань<br>г, Клары Цеткин ул, дом № 1, квартира 1</div>
<div class="rd" style="left:964px;top:439px">РОССИЯ</div>
<div class="rd" style="left:1095px;top:439px">Граждане РФ</div>
<div class="rd" style="left:1357px;top:439px">31.12.</div>
<div class="hl" style="left:33px;top:470px;width:1400px"></div>
<div class="rd" style="left:37px;top:472px">Погодина Тамара Анатольевна</div>
<div class="rd" style="left:299px;top:472px">602100966743</div>
<div class="rd" style="left:404px;top:472px">116-614-567 49</div>
<div class="rd" style="left:509px;top:472px">31.12.1966</div>
<div class="rd" style="left:614px;top:472px">РОССИЯ, 682800, Хабаровский край, Советская Гавань<br>г, Клары Цеткин ул, дом № 1, квартира 2</div>
<div class="rd" style="left:964px;top:472px">РОССИЯ</div>
<div class="rd" style="left:1095px;top:472px">Граждане РФ</div>
<div class="rd" style="left:1357px;top:472px">31.12.</div>
<div class="hl" style="left:33px;top:503px;width:1400px"></div>
<div class="rd" style="left:37px;top:505px">Ревин Лев Соломонович</div>
<div class="rd" style="left:299px;top:505px">344406442811</div>
<div class="rd" style="left:404px;top:505px">123-307-233 06</div>
<div class="rd" style="left:509px;top:505px">31.12.1966</div>
<div class="rd" style="left:614px;top:505px">РОССИЯ, 682841, Хабаровский край, Советская Гавань<br>г, Лесной 3-й пер, дом № 1, квартира 1</div>
<div class="rd" style="left:964px;top:505px">РОССИЯ</div>
<div class="rd" style="left:1095px;top:505px">Граждане РФ</div>
<div class="rd" style="left:1357px;top:505px">31.12.</div>
<div class="hl" style="left:33px;top:536px;width:1400px"></div>
<div class="rd" style="left:37px;top:538px">Розенфельд Софья Исааковна</div>
<div class="rd" style="left:299px;top:538px">370200103510</div>
<div class="rd" style="left:404px;top:538px">098-863-659 53</div>
<div class="rd" style="left:509px;top:538px">01.01.1967</div>
<div class="rd" style="left:614px;top:538px">РОССИЯ, 682841, Хабаровский край, Советская Гавань<br>г, Лесной 3-й пер, дом № 1, квартира 2</div>
<div class="rd" style="left:964px;top:538px">РОССИЯ</div>
<div class="rd" style="left:1095px;top:538px">Граждане РФ</div>
<div class="rd" style="left:1357px;top:538px">01.01.</div>
<div class="hl" style="left:33px;top:569px;width:1400px"></div>
<div class="rd" style="left:37px;top:571px">Савельева Римма Михеевна</div>
<div class="rd" style="left:299px;top:571px">024504856552</div>
<div class="rd" style="left:404px;top:571px">104-383-245 25</div>
<div class="rd" style="left:509px;top:571px">01.01.1967</div>
<div class="rd" style="left:614px;top:571px">РОССИЯ, 682800, Хабаровский край, Советская Гавань<br>г, Южная ул, дом № 1, квартира 1</div>
<div class="rd" style="left:964px;top:571px">РОССИЯ</div>
<div class="rd" style="left:1095px;top:571px">Граждане РФ</div>
<div class="rd" style="left:1357px;top:571px">01.01.</div>
<div class="abs" style="left:0;top:595px;width:1400px;height:20px;background:#fff"></div>
</div>
<svg class="abs" style="left:1385px;top:9px" width="6" height="4" viewBox="0 0 6 4"><path d="M0 4h6L3 0z" fill="#bdbdbd"/></svg>
<div class="abs" style="left:1384px;top:23px;width:8px;height:549px;border-radius:4px;background:#d8d8d8"></div>
<div class="abs" style="left:1384px;top:23px;width:8px;height:278px;border-radius:4px;background:#9b9b9b"></div>
<svg class="abs" style="left:1385px;top:582px" width="6" height="4" viewBox="0 0 6 4"><path d="M0 0h6L3 4z" fill="#555"/></svg>
<svg class="abs" style="left:9px;top:599px" width="4" height="6" viewBox="0 0 4 6"><path d="M4 0v6L0 3z" fill="#c4c4c4"/></svg>
<div class="abs" style="left:23px;top:598px;width:1335px;height:8px;border-radius:4px;background:#d8d8d8"></div>
<div class="abs" style="left:23px;top:598px;width:1214px;height:8px;border-radius:4px;background:#9b9b9b"></div>
<svg class="abs" style="left:1368px;top:599px" width="4" height="6" viewBox="0 0 4 6"><path d="M0 0v6L4 3z" fill="#444"/></svg>
</div>
<svg class="abs" style="left:400px;top:290px" width="140" height="552" viewBox="400 290 140 552">
<g fill="none" stroke="#e21b24" stroke-width="4.500">
<path d="M448.200 362.200V300.200H491.200V362.200" stroke-linejoin="miter"/>
<path d="M450.450 362.200H426.800L469.500 422.400L512.200 362.200H488.950" stroke-linejoin="round"/>
<rect x="415.700" y="427.700" width="110" height="406"/>
</g></svg>
</div>
</body></html>
